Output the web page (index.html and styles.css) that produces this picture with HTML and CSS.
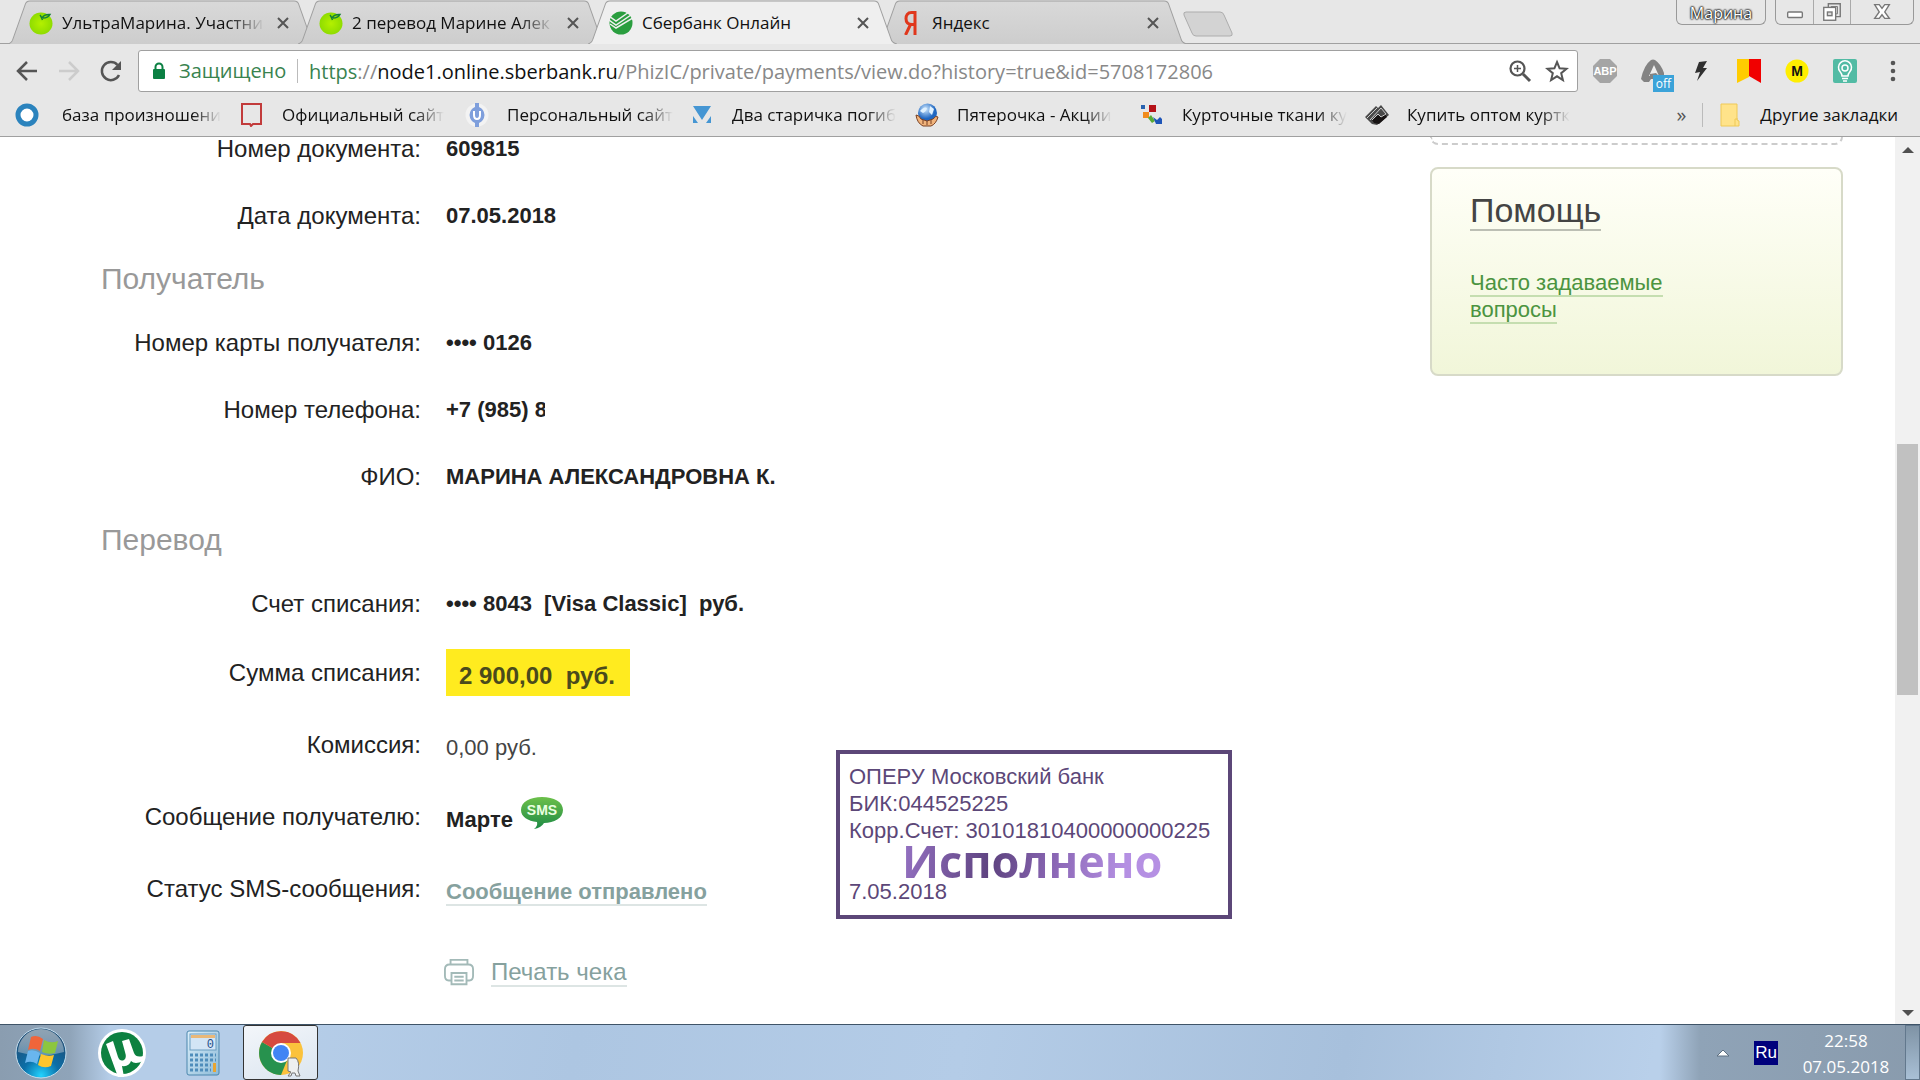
FILE: index.html
```html
<!DOCTYPE html>
<html lang="ru">
<head>
    <meta charset="UTF-8">
    <meta name="viewport" content="width=device-width, initial-scale=1.0">
    <title>Сбербанк Онлайн</title>
    <link rel="stylesheet" href="styles.css">
</head>
<body>
    <svg width="0" height="0" class="defs" aria-hidden="true">
        <defs>
            <linearGradient id="tabGrey" x1="0" y1="0" x2="0" y2="1">
                <stop offset="0" stop-color="#d9d9d9"/><stop offset="1" stop-color="#cdcdcd"/>
            </linearGradient>
            <linearGradient id="smsGreen" x1="0" y1="0" x2="0" y2="1">
                <stop offset="0" stop-color="#6cc04a"/><stop offset="1" stop-color="#1c8a45"/>
            </linearGradient>
            <radialGradient id="appleGreen">
                <stop offset="0" stop-color="#b4f000"/><stop offset="1" stop-color="#8fdc00"/>
            </radialGradient>
            <radialGradient id="orbBlue" cx="0.5" cy="0.95" r="0.8">
                <stop offset="0" stop-color="#22d3ff"/><stop offset="0.45" stop-color="#0b6fa8"/><stop offset="1" stop-color="#1f4f78"/>
            </radialGradient>
            <linearGradient id="orbGloss" x1="0" y1="0" x2="0" y2="1">
                <stop offset="0" stop-color="#8fa3b3"/><stop offset="1" stop-color="#b9c8d4" stop-opacity="0.45"/>
            </linearGradient>
            <linearGradient id="calcBody" x1="0" y1="0" x2="1" y2="1">
                <stop offset="0" stop-color="#ddf0fb"/><stop offset="1" stop-color="#8dbbd8"/>
            </linearGradient>
            <radialGradient id="globe" cx="0.4" cy="0.3">
                <stop offset="0" stop-color="#cfe9ff"/><stop offset="1" stop-color="#1f66c0"/>
            </radialGradient>
            <symbol id="tabShape" viewBox="0 0 309 43" preserveAspectRatio="none">
                <path d="M0 43 Q4 42 5 38 L17 5 Q18 1 22 1 H286 Q290 1 291 5 L303 38 Q304 42 309 43"/>
            </symbol>
            <symbol id="apple" viewBox="0 0 24 24">
                <ellipse cx="12" cy="12.500" rx="11.500" ry="11" fill="url(#appleGreen)"/>
                <path d="M11 4 Q12 5 13.500 9 M13 7 Q15 3 21 3.500 Q19 7 14 7" fill="none" stroke="#15803a" stroke-width="1.500"/>
            </symbol>
            <symbol id="cross" viewBox="0 0 12 12">
                <path d="M1 1 L11 11 M11 1 L1 11" stroke="#555" stroke-width="2"/>
            </symbol>
        </defs>
    </svg>

    <header class="browser">
        <div class="tab-strip">
            <div class="tab">
                <svg class="tab-bg"><use href="#tabShape"/></svg>
                <svg class="tab-icon"><use href="#apple"/></svg>
                <span class="tab-title fade">УльтраМарина. Участни</span>
                <button class="tab-close" aria-label="Закрыть"><svg><use href="#cross"/></svg></button>
            </div>
            <div class="tab">
                <svg class="tab-bg"><use href="#tabShape"/></svg>
                <svg class="tab-icon"><use href="#apple"/></svg>
                <span class="tab-title fade">2 перевод Марине Алек</span>
                <button class="tab-close" aria-label="Закрыть"><svg><use href="#cross"/></svg></button>
            </div>
            <div class="tab active">
                <svg class="tab-bg"><use href="#tabShape"/></svg>
                <svg class="tab-icon" viewBox="0 0 24 24">
                    <circle cx="12" cy="12" r="11.500" fill="#2a9e3f"/>
                    <path d="M0 5 L7 10 L20 1 M0 9 L7 14 L22 4 M1 13 L7 17 L24 7" fill="none" stroke="#f0f0f0" stroke-width="1.500"/>
                </svg>
                <span class="tab-title">Сбербанк Онлайн</span>
                <button class="tab-close" aria-label="Закрыть"><svg><use href="#cross"/></svg></button>
            </div>
            <div class="tab">
                <svg class="tab-bg"><use href="#tabShape"/></svg>
                <svg class="tab-icon" viewBox="0 0 24 24">
                    <path d="M16 24 V1.500 H12.500 C8.500 1.500 7 4.500 7 7.500 C7 11 9 13.500 13 13.500 H16 M11.500 13.500 L6.500 24" fill="none" stroke="#e0371c" stroke-width="3"/>
                </svg>
                <span class="tab-title">Яндекс</span>
                <button class="tab-close" aria-label="Закрыть"><svg><use href="#cross"/></svg></button>
            </div>
            <button class="new-tab" aria-label="Новая вкладка">
                <svg viewBox="0 0 52 27"><path d="M4 1 H38 Q41 1 42 4 L50 22 Q51 25 48 25 H14 Q11 25 10 22 L2 4 Q1 1 4 1Z" fill="#d3d3d3" stroke="#adadad"/></svg>
            </button>
            <div class="window-controls">
                <button class="profile">Марина</button>
                <div class="control-group">
                    <button aria-label="Свернуть"><svg viewBox="0 0 24 24"><rect x="4" y="12" width="16" height="6" rx="1" fill="#fff" stroke="#777" stroke-width="1.500"/></svg></button>
                    <button aria-label="Развернуть"><svg viewBox="0 0 24 24"><path d="M8 7 V3 H21 V17 H16" fill="none" stroke="#777" stroke-width="1.500"/><path d="M11 7 V6 H18 V14 H16" fill="none" stroke="#777"/><rect x="3" y="7" width="13" height="14" fill="#fff" stroke="#777" stroke-width="1.500"/><rect x="7" y="12" width="5" height="4" fill="#ddd" stroke="#777" stroke-width="1.500"/></svg></button>
                    <button class="close" aria-label="Закрыть окно"><svg viewBox="0 0 24 24"><path d="M4 4 H9 L12 8 L15 4 H20 L15 12 L20 19 H15 L12 15 L9 19 H4 L9 12Z" fill="#fff" stroke="#777" stroke-width="1.500"/></svg></button>
                </div>
            </div>
        </div>

        <div class="toolbar">
            <nav class="nav-buttons">
                <button aria-label="Назад"><svg viewBox="0 0 24 24"><path d="M22 12 H3 M12 3 L3 12 L12 21" fill="none" stroke="#555" stroke-width="2.500"/></svg></button>
                <button aria-label="Вперёд"><svg viewBox="0 0 24 24"><path d="M2 12 H21 M12 3 L21 12 L12 21" fill="none" stroke="#ccc" stroke-width="2.500"/></svg></button>
                <button aria-label="Обновить"><svg viewBox="0 0 24 24"><path d="M20 16 A9 9 0 1 1 18.500 6" fill="none" stroke="#555" stroke-width="2.500"/><path d="M22 2 V11 H13Z" fill="#555"/></svg></button>
            </nav>
            <div class="address-bar">
                <svg class="lock" viewBox="0 0 12 18"><rect y="7" width="12" height="10" rx="1" fill="#0b8043"/><path d="M2.500 8 V5 A3.500 3.500 0 0 1 9.500 5 V8" fill="none" stroke="#0b8043" stroke-width="2"/></svg>
                <span class="secure">Защищено</span>
                <span class="url"><span class="scheme">https</span>://<span class="host">node1.online.sberbank.ru</span>/PhizIC/private/payments/view.do?history=true&amp;id=5708172806</span>
                <button aria-label="Масштаб"><svg viewBox="0 0 24 24"><circle cx="9.500" cy="9.500" r="7" fill="none" stroke="#555" stroke-width="2.200"/><path d="M15 15 L22 22" stroke="#555" stroke-width="3"/><path d="M6 9.500 H13 M9.500 6 V13" stroke="#555" stroke-width="1.500"/></svg></button>
                <button aria-label="В закладки"><svg viewBox="0 0 24 24"><path d="M12 3 L14.600 9.300 L21.500 9.800 L16.200 14.200 L17.900 21 L12 17.300 L6.100 21 L7.800 14.200 L2.500 9.800 L9.400 9.300Z" fill="none" stroke="#555" stroke-width="2"/></svg></button>
            </div>
            <div class="extensions">
                <button aria-label="ABP"><svg viewBox="0 0 24 24"><path d="M7 0 H17 L24 7 V17 L17 24 H7 L0 17 V7Z" fill="#a5a5a5"/><text x="12" y="16" class="abp">ABP</text></svg></button>
                <button class="ext-off" aria-label="Расширение"><svg viewBox="0 0 24 24"><path d="M0 20 Q3 6 10 1 Q12 0 14 1 Q20 5 23 14 V20 H10 L8 23 H3Z" fill="#838383"/><path d="M8 17 L13 6 L18 17Z" fill="#eee"/><path d="M9 15 L15 14 L19 18 H9Z" fill="#838383"/></svg><span class="badge">off</span></button>
                <button aria-label="Молния"><svg viewBox="0 0 24 24"><path d="M10 3 L18 2 L14 9 L18 9 L8 22 L11 13 L6 14Z" fill="#303030"/></svg></button>
                <button aria-label="Закладки"><svg viewBox="0 0 24 24"><path d="M0 0 H12 V18 L0 24Z" fill="#fc0"/><path d="M12 0 H24 V24 L12 17Z" fill="#f10000"/></svg></button>
                <button aria-label="M"><svg viewBox="0 0 24 24"><circle cx="12" cy="12" r="11.500" fill="#ffee00"/><text x="12" y="17" class="letter-m">M</text></svg></button>
                <button aria-label="Подсказка"><svg viewBox="0 0 24 24"><rect width="24" height="24" rx="2" fill="#52bba4"/><path d="M9 17 Q9 15 7 12.500 A6.500 6.500 0 1 1 17 12.500 Q15 15 15 17Z" fill="none" stroke="#fff" stroke-width="1.500"/><circle cx="12" cy="9" r="3" fill="none" stroke="#fff" stroke-width="1.500"/><path d="M9 19.500 H15 M10 22 H14" stroke="#fff" stroke-width="1.500"/></svg></button>
                <button aria-label="Меню"><svg viewBox="0 0 24 24"><circle cx="12" cy="4" r="2.300" fill="#555"/><circle cx="12" cy="12" r="2.300" fill="#555"/><circle cx="12" cy="20" r="2.300" fill="#555"/></svg></button>
            </div>
        </div>

        <nav class="bookmarks">
            <a href="#" class="bookmark">
                <svg viewBox="0 0 24 24"><circle cx="12" cy="12" r="9" fill="#fff" stroke="#2b83bd" stroke-width="5"/></svg>
                <span class="fade">база произношени</span>
            </a>
            <a href="#" class="bookmark">
                <svg viewBox="0 0 24 24"><path d="M2 1 H21 V21 H13 L11 23 L10 21 H2Z" fill="none" stroke="#c23b3b" stroke-width="2"/></svg>
                <span class="fade">Официальный сайт</span>
            </a>
            <a href="#" class="bookmark">
                <svg viewBox="0 0 24 24"><circle cx="12" cy="12" r="11.500" fill="#f3f3f3"/><path d="M10 0 H14 V4 Q19 6 19.500 12 Q19 18 14 20 V24 H10 V20 Q5 18 4.500 12 Q5 6 10 4Z" fill="#7f9fdc"/><path d="M9 8 V12 Q9 16 12 16 Q15 16 15 12 V8" fill="none" stroke="#fff" stroke-width="2"/></svg>
                <span class="fade">Персональный сайт</span>
            </a>
            <a href="#" class="bookmark">
                <svg viewBox="0 0 24 24"><path d="M3 3 H21 L12 17Z M3 20 V13 L8 20Z M21 20 V13 L16 20Z" fill="#4596d3"/></svg>
                <span class="fade">Два старичка погиб</span>
            </a>
            <a href="#" class="bookmark">
                <svg viewBox="0 0 24 24"><circle cx="12.500" cy="10" r="9.500" fill="url(#globe)"/><path d="M5 8 Q9 3 12 5 Q11 9 8 10Z M15 3 L19 6 L17 12 L14 9Z" fill="#dff1ff"/><path d="M1 12 Q4 12 6 16 L12 18 L18 16 Q21 12 23 14 Q21 21 16 23 H8 Q2 20 1 12Z" fill="#f1b47c" stroke="#784023"/><path d="M8 17 V21 M12 18 V22 M16 17 V21" stroke="#784023"/></svg>
                <span class="fade">Пятерочка - Акции</span>
            </a>
            <a href="#" class="bookmark">
                <svg viewBox="0 0 24 24"><rect x="1" y="2" width="4" height="4" fill="#2762b0"/><rect x="9" y="2" width="7" height="7" fill="#b51218"/><rect x="3" y="9" width="6" height="6" fill="#f18b1c"/><path d="M8 15 L11 12 L15 18 L12 20Z" fill="#59ab34"/><path d="M13 14 L17 17 L20 14 L22 16 V21 H16Z" fill="#1e55b8"/></svg>
                <span class="fade">Курточные ткани ку</span>
            </a>
            <a href="#" class="bookmark">
                <svg viewBox="0 0 24 24"><path d="M0 14 L11 3 L13 5 L16 2 L24 12 L12 22 L7 21Z" fill="#4a4a4a"/><path d="M7 17 L13 12 L16 14 L20 11 L22 14 L14 21 L9 20Z" fill="#171313"/><path d="M2 15 L12 5 M5 17 L16 5 L21 11 L16 14 L13 11 L7 17" fill="none" stroke="#ccc"/></svg>
                <span class="fade">Купить оптом куртк</span>
            </a>
            <div class="bookmarks-more">
                <button class="more" aria-label="Ещё закладки">»</button>
                <a href="#" class="folder">
                    <svg viewBox="0 0 24 24"><path d="M3 1 H19 V17 L21 18 V23 H3Z" fill="#ffe38a" stroke="#efc956"/><path d="M17 23 V16 H20" fill="none" stroke="#efc956"/></svg>
                    <span>Другие закладки</span>
                </a>
            </div>
        </nav>
    </header>

    <div class="viewport">
        <main class="page">
            <section class="details">
                <div class="row"><span class="label">Номер документа:</span><b class="value">609815</b></div>
                <div class="row"><span class="label">Дата документа:</span><b class="value">07.05.2018</b></div>

                <h2>Получатель</h2>
                <div class="row"><span class="label">Номер карты получателя:</span><b class="value">•••• 0126</b></div>
                <div class="row"><span class="label">Номер телефона:</span><b class="value phone">+7 (985) 8</b></div>
                <div class="row"><span class="label">ФИО:</span><b class="value">МАРИНА АЛЕКСАНДРОВНА К.</b></div>

                <h2>Перевод</h2>
                <div class="row"><span class="label">Счет списания:</span><b class="value">•••• 8043&nbsp; [Visa Classic]&nbsp; руб.</b></div>
                <div class="row tall"><span class="label">Сумма списания:</span><b class="amount">2 900,00&nbsp; руб.</b></div>

                <div class="stamped">
                    <div class="stamped-rows">
                        <div class="row tall"><span class="label">Комиссия:</span><span class="value fee">0,00 руб.</span></div>
                        <div class="row tall">
                            <span class="label">Сообщение получателю:</span><b class="value">Марте</b>
                            <svg class="sms" viewBox="0 0 44 34"><path d="M22 1 C34 1 43 6 43 14 C43 22 34 27 24 27 Q21 32 14 33 Q18 30 17 26 C8 25 1 21 1 14 C1 6 10 1 22 1Z" fill="url(#smsGreen)"/><text x="22" y="19">SMS</text></svg>
                        </div>
                        <div class="row tall"><span class="label">Статус SMS-сообщения:</span><span class="value"><a href="#" class="soft-link sent">Сообщение отправлено</a></span></div>
                    </div>
                    <div class="stamp">
                        <div>ОПЕРУ Московский банк</div>
                        <div>БИК:044525225</div>
                        <div>Корр.Счет: 30101810400000000225</div>
                        <div class="stamp-state"><strong>Исполнено</strong></div>
                        <div>7.05.2018</div>
                    </div>
                </div>

                <div class="print">
                    <svg viewBox="0 0 32 28"><g fill="none" stroke="#a3bab8" stroke-width="2"><path d="M7 6 V1 H25 V6"/><path d="M8 23 H5 Q1 23 1 18 V11 Q1 6 6 6 H26 Q31 6 31 11 V18 Q31 23 27 23 H24"/><path d="M8 15 H24 V27 H8Z M11 19 H21 M11 23 H21"/></g></svg>
                    <a href="#" class="soft-link">Печать чека</a>
                </div>
            </section>

            <aside class="sidebar">
                <div class="dashed-box"></div>
                <div class="help">
                    <h3><a href="#">Помощь</a></h3>
                    <p><a href="#">Часто задаваемые<br>вопросы</a></p>
                </div>
            </aside>
        </main>
        <div class="scrollbar">
            <svg viewBox="0 0 12 6"><path d="M0 6 L6 0 L12 6Z" fill="#505050"/></svg>
            <div class="track"><div class="thumb"></div></div>
            <svg viewBox="0 0 12 6"><path d="M0 0 L6 6 L12 0Z" fill="#505050"/></svg>
        </div>
    </div>

    <footer class="taskbar">
        <button class="task" aria-label="Пуск">
            <svg viewBox="0 0 52 52">
                <circle cx="26" cy="26" r="25" fill="url(#orbBlue)" stroke="#c3dcec"/>
                <path d="M3 25 A23 23 0 0 1 49 25 Q26 32 3 25Z" fill="url(#orbGloss)"/>
                <path d="M16 10 Q22 7 28 12 L25 24 Q19 20 13 23Z" fill="#f0653a"/>
                <path d="M29 13 Q36 17 43 14 L40 26 Q33 28 27 25Z" fill="#8cc63f"/>
                <path d="M13 24 Q19 22 25 26 L22 37 Q16 33 10 36Z" fill="#69b6ee"/>
                <path d="M26 27 Q33 30 39 28 L36 39 Q29 42 23 38Z" fill="#fdc52c"/>
            </svg>
        </button>
        <button class="task" aria-label="uTorrent">
            <svg viewBox="0 0 52 52">
                <circle cx="26" cy="26" r="24" fill="#fff"/><circle cx="26" cy="26" r="21" fill="#0d8140"/>
                <path d="M10 17 L17 14 L22 30 Q24 35 28 33 Q31 31 29 25 L26 14 L33 12 L38 26 Q40 31 47 29 L47 34 Q39 38 35 34 Q33 40 26 39 L28 50 H22Z" fill="#fff"/>
            </svg>
        </button>
        <button class="task" aria-label="Калькулятор">
            <svg viewBox="0 0 52 52">
                <rect x="10" y="4" width="32" height="44" rx="2" fill="url(#calcBody)" stroke="#4a86ad"/>
                <rect x="13" y="7" width="26" height="16" fill="#d3e5f5" stroke="#6b9dc0"/><rect x="14" y="8" width="24" height="3" fill="#e9b878"/>
                <text x="37" y="21" class="calc-zero">0</text>
                <path d="M13 28 H39 M13 33 H39 M13 38 H34 M13 43 H34" stroke="#4f8dbb" stroke-width="3" stroke-dasharray="3 2"/>
                <rect x="36" y="36" width="3" height="9" fill="#e8a531"/>
            </svg>
        </button>
        <button class="task current" aria-label="Google Chrome">
            <svg viewBox="0 0 52 52">
                <circle cx="26" cy="26" r="22" fill="#fbc23c"/>
                <path d="M26 26 L7 15 A22 22 0 0 0 26 48 L33 31Z" fill="#27924e"/>
                <path d="M26 26 L7 15 A22 22 0 0 1 45.500 16 H26Z" fill="#d64a3f"/>
                <circle cx="26" cy="26" r="10" fill="#fff"/><circle cx="26" cy="26" r="8" fill="#4285f4"/>
                <path d="M33 31 H41 Q45 35 43 44 L45 49 H41 L40 46 H37 L36 49 H33 L36 45 L33 44Z" fill="#eef0f0" stroke="#777"/>
            </svg>
        </button>
        <div class="tray">
            <svg class="tray-arrow" viewBox="0 0 14 8"><path d="M1 7 L7 1 L13 7Z" fill="#fff" stroke="#5d6f80"/></svg>
            <span class="lang">Ru</span>
            <div class="clock"><div>22:58</div><div>07.05.2018</div></div>
            <button class="show-desktop" aria-label="Свернуть все окна"></button>
        </div>
    </footer>
</body>
</html>
```
FILE: styles.css
```css
:root {
    --chrome: #e7e7e7;
    --line: #a0a0a0;
    --ui-font: "Open Sans", "Noto Sans", sans-serif;
    --page-font: "Liberation Sans", Arial, sans-serif;
    --soft: #86a19e;
    --stamp: #5c4778;
}

* {
    box-sizing: border-box;
}

body {
    margin: 0;
    height: 100vh;
    display: flex;
    flex-direction: column;
    overflow: hidden;
    background: #fff;
    font-family: var(--page-font);
}

button {
    padding: 0;
    border: 0;
    background: none;
    font: inherit;
    color: inherit;
}

a {
    color: inherit;
    text-decoration: none;
}

svg {
    display: block;
    flex: none;
}

.defs {
    position: absolute;
}

/* ---------- browser ---------- */
.browser {
    flex: none;
    background: var(--chrome);
    border-bottom: 1px solid var(--line);
    font-family: var(--ui-font);
    font-size: 17px;
    color: #111;
}

.tab-strip {
    display: flex;
    height: 44px;
    padding-left: 8px;
    background: linear-gradient(var(--line), var(--line)) bottom / 100% 1px no-repeat;
}

.tab {
    position: relative;
    display: flex;
    align-items: center;
    width: 309px;
    height: 44px;
    margin-right: -19px;
    padding: 1px 20px 0 21px;
}

.tab-bg {
    position: absolute;
    left: 0;
    top: 0;
    width: 100%;
    height: 100%;
    fill: url(#tabGrey);
    stroke: var(--line);
}

.tab.active {
    z-index: 1;
}

.tab.active .tab-bg {
    fill: #efefef;
}

.tab-icon {
    position: relative;
    width: 24px;
    height: 24px;
    margin-right: 9px;
}

.tab-title {
    position: relative;
    flex: 1;
    white-space: nowrap;
}

/* long titles dissolve at the right edge */
.fade {
    -webkit-mask-image: linear-gradient(to right, #000 82%, transparent);
    mask-image: linear-gradient(to right, #000 82%, transparent);
}

.tab-close {
    position: relative;
    width: 12px;
    margin: 0 8px 0 12px;
}

.tab-close svg {
    width: 12px;
    height: 12px;
}

.new-tab {
    align-self: flex-start;
    margin: 11px 0 0 14px;
}

.new-tab svg {
    width: 52px;
    height: 27px;
}

.window-controls {
    display: flex;
    gap: 9px;
    height: 25px;
    margin-left: auto;
    padding-right: 6px;
}

.profile,
.control-group {
    border: 1px solid #999;
    border-top: 0;
    border-radius: 0 0 6px 6px;
}

.profile {
    width: 90px;
    padding-top: 2px;
    font-size: 16px;
    color: #fff;
    text-shadow: 0 0 2px #000, 0 0 2px #000, 0 0 2px #000;
}

.control-group {
    display: flex;
}

.control-group button {
    width: 37px;
    display: flex;
    align-items: center;
    justify-content: center;
    border-left: 1px solid #aaa;
}

.control-group button:first-child {
    border-left: 0;
}

.control-group .close {
    width: 63px;
}

.control-group svg {
    width: 22px;
    height: 22px;
}

.toolbar {
    display: flex;
    align-items: center;
    height: 54px;
    padding: 0 6px;
}

.nav-buttons {
    display: flex;
    gap: 18px;
    width: 132px;
    padding-left: 9px;
}

.toolbar button svg {
    width: 24px;
    height: 24px;
}

.address-bar {
    flex: 1;
    display: flex;
    align-items: center;
    height: 42px;
    padding: 0 8px 0 14px;
    border: 1px solid var(--line);
    border-radius: 3px;
    background: #fff;
    font-size: 20px;
}

.lock {
    width: 12px;
    height: 18px;
    margin-right: 14px;
}

.secure {
    width: 119px;
    border-right: 1px solid #bbb;
    color: #39834f;
    line-height: 24px;
}

.url {
    flex: 1;
    padding-left: 11px;
    white-space: nowrap;
    color: #888;
}

.scheme {
    color: #39834f;
}

.host {
    color: #111;
}

.address-bar button {
    margin-left: 13px;
}

.extensions {
    display: flex;
    gap: 24px;
    padding: 0 9px 0 15px;
}

.abp,
.letter-m {
    font: bold 11px "Liberation Sans", sans-serif;
    fill: #fff;
    text-anchor: middle;
}

.letter-m {
    font-size: 14px;
    fill: #111;
}

.ext-off {
    position: relative;
}

.badge {
    position: absolute;
    left: 12px;
    top: 16px;
    width: 21px;
    height: 17px;
    background: #3ba3d9;
    color: #fff;
    font-size: 12px;
    line-height: 17px;
}

.bookmarks {
    display: flex;
    align-items: center;
    height: 38px;
    padding: 0 22px 5px 15px;
}

.bookmark,
.folder {
    display: flex;
    align-items: center;
    white-space: nowrap;
}

.bookmark {
    flex: 0 1 225px;
}

.bookmarks svg {
    width: 24px;
    height: 24px;
}

.bookmark span {
    margin-left: 23px;
}

.bookmark + .bookmark span {
    margin-left: 18px;
}

.bookmarks-more {
    display: flex;
    align-items: center;
    margin-left: auto;
}

.more {
    padding-right: 16px;
    font-size: 20px;
    color: #555;
}

.folder {
    padding-left: 15px;
    gap: 18px;
    border-left: 1px solid #bbb;
}

/* ---------- bank page ---------- */
.viewport {
    flex: 1;
    min-height: 0;
    display: flex;
}

.page {
    flex: 1;
    display: flex;
    justify-content: space-between;
    overflow: hidden;
    font-size: 24px;
    line-height: 27px;
    color: #222;
}

.details {
    margin-top: -22px;
    padding-left: 101px;
}

.row {
    display: flex;
    align-items: center;
    height: 67px;
}

.row.tall {
    height: 71px;
}

.label {
    width: 320px;
    margin-right: 25px;
    text-align: right;
    white-space: nowrap;
}

.value {
    white-space: nowrap;
    font-size: 22px;
}

.phone {
    width: 99px;
    overflow: hidden;
}

h2 {
    margin: 0;
    font-size: 30px;
    font-weight: normal;
    line-height: 60px;
    color: #999;
}

.amount {
    padding: 13px 15px 7px 13px;
    background: #ffeb1f;
    color: #4a4a1c;
}

.stamped {
    display: flex;
    align-items: flex-end;
}

.stamped-rows {
    width: 735px;
}

.stamped .row {
    height: 72px;
}

.stamped .value {
    padding-top: 6px;
}

.fee {
    color: #444;
}

.sms {
    width: 44px;
    height: 34px;
    margin: 0 0 6px 7px;
}

.sms text {
    font: bold 14px "Liberation Sans", sans-serif;
    fill: #eaffe0;
    text-anchor: middle;
}

.soft-link {
    border-bottom: 2px solid #dde5e4;
    color: var(--soft);
}

.sent {
    font-weight: bold;
}

.stamp {
    min-width: 396px;
    margin-bottom: 5px;
    padding: 9px 8px 10px 9px;
    border: 4px solid var(--stamp);
    font-size: 22px;
    color: var(--stamp);
}

.stamp-state {
    height: 34px;
    padding-left: 53px;
    font: 45px/34px "Open Sans", sans-serif;
}

.stamp-state strong {
    background: linear-gradient(100deg, #9673c4, #5e4380 35%, #8d69b8 60%, #b590e3 85%);
    -webkit-background-clip: text;
    background-clip: text;
    color: transparent;
}

.print {
    display: flex;
    align-items: center;
    gap: 17px;
    height: 96px;
    padding-left: 343px;
}

.print svg {
    width: 30px;
    height: 28px;
}

.sidebar {
    width: 413px;
    margin-right: 52px;
}

.dashed-box {
    height: 8px;
    border: 2px dashed #ccc;
    border-top: 0;
    border-radius: 0 0 8px 8px;
}

.help {
    margin-top: 22px;
    height: 209px;
    padding: 21px 38px;
    border: 2px solid #d7dac8;
    border-radius: 8px;
    background: linear-gradient(#fffff8, #f1f6d9);
}

.help h3 {
    margin: 0 0 39px;
    font-size: 34px;
    font-weight: normal;
    line-height: 40px;
    color: #444;
}

.help h3 a {
    border-bottom: 2px solid #bcbfb4;
}

.help p {
    margin: 0;
    font-size: 22px;
    color: #4b9440;
}

.help p a {
    border-bottom: 2px solid #c5deb0;
}

.scrollbar {
    width: 25px;
    display: flex;
    flex-direction: column;
    align-items: center;
    padding: 10px 0 8px;
    background: #f1f1f1;
}

.scrollbar svg {
    width: 12px;
    height: 6px;
}

.track {
    flex: 1;
    width: 21px;
    padding: 291px 0 315px;
}

.thumb {
    height: 100%;
    background: #c1c1c1;
}

/* ---------- taskbar ---------- */
.taskbar {
    flex: none;
    display: flex;
    height: 56px;
    border-top: 1px solid #3f5468;
    background:
        linear-gradient(to right, #8a9db0, #8fa4b9 70px, transparent 110px),
        linear-gradient(to left, #899bad, #8fa3b7 220px, transparent 260px),
        linear-gradient(100deg, #b5cde8 15%, #adc6e2 30%, #b4cce7 50%, #a7c0dc 70%, #b9d0ea 86%);
    color: #fff;
}

.task {
    width: 81px;
    display: flex;
    align-items: center;
    justify-content: center;
}

.task svg {
    width: 52px;
    height: 52px;
}

.task.current {
    width: 75px;
    border: 1px solid #333;
    border-radius: 3px;
    background: linear-gradient(160deg, #f3f6fa, #dbe5f0);
}

.calc-zero {
    font: 12px "Liberation Mono", monospace;
    fill: #23508a;
    text-anchor: end;
}

.tray {
    display: flex;
    align-items: center;
    margin-left: auto;
    font-family: var(--ui-font);
    font-size: 17px;
}

.tray-arrow {
    width: 14px;
    height: 8px;
    margin-right: 24px;
}

.lang {
    width: 24px;
    background: #00007c;
    line-height: 24px;
    text-align: center;
    font-family: var(--page-font);
}

.clock {
    width: 127px;
    padding: 2px 0 0 9px;
    line-height: 26px;
    text-align: center;
}

.show-desktop {
    width: 15px;
    height: 100%;
    border: 1px solid #62788d;
    background: linear-gradient(#7f93a5, #a9c0d6);
}
```
